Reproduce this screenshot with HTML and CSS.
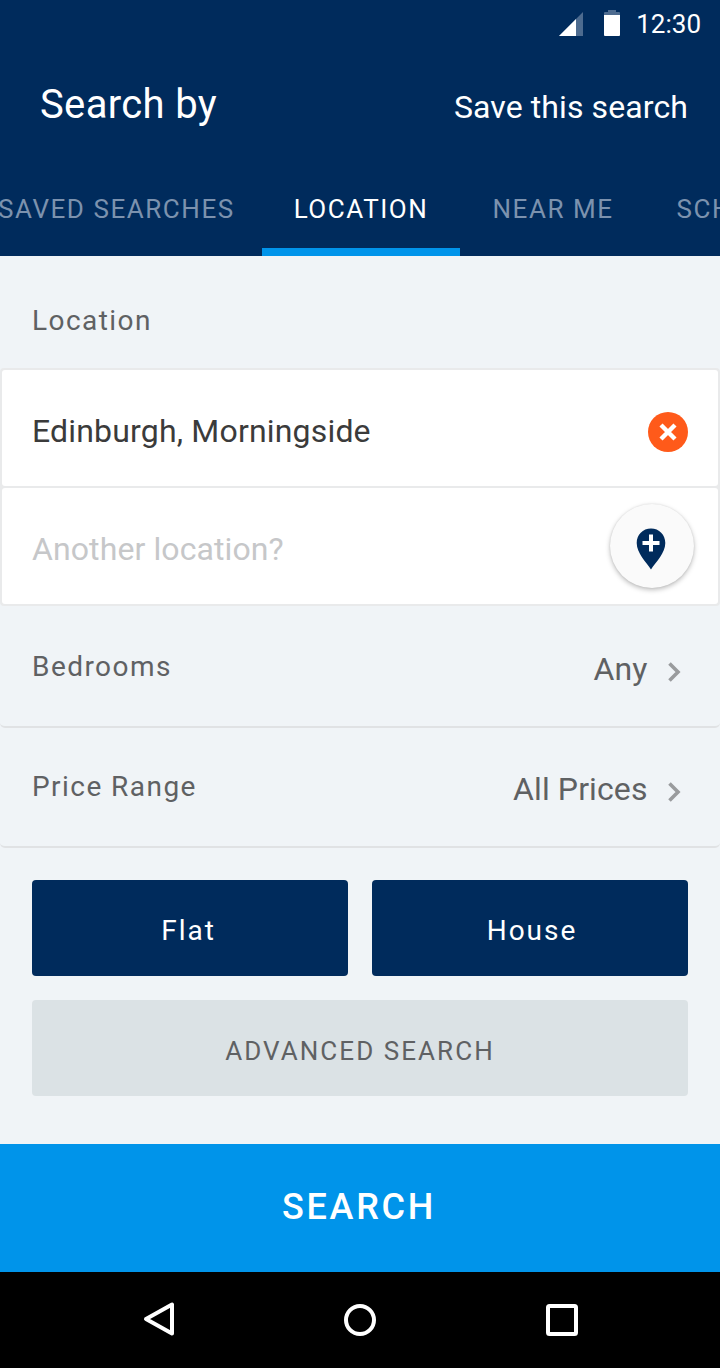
FILE: index.html
```
<!DOCTYPE html>
<html lang="en">
<head>
<meta charset="utf-8">
<title>Property search</title>
<link rel="stylesheet" href="styles.css">
</head>
<body>
<header class="top">
  <div class="status">
    <svg class="signal" width="24" height="24" viewBox="0 0 24 24"><path d="M0 24L24 0V24Z" fill="#4d6b8f"/><path d="M0 24L17 7V24Z" fill="#fff"/></svg>
    <svg class="battery" width="16" height="26" viewBox="0 0 16 26"><path d="M4 0h8v2h3a1 1 0 0 1 1 1v3H0V3a1 1 0 0 1 1-1h3z" fill="#4d6b8f"/><path d="M0 5h16v20a1 1 0 0 1-1 1H1a1 1 0 0 1-1-1z" fill="#fff"/></svg>
    <span class="time">12:30</span>
  </div>
  <div class="header">
    <h1 class="title">Search by</h1>
    <a class="save">Save this search</a>
  </div>
  <nav class="tabs">
    <a class="tab tab-saved">SAVED SEARCHES</a>
    <a class="tab tab-active">LOCATION</a>
    <a class="tab tab-near">NEAR ME</a>
    <a class="tab tab-schools">SCHOOLS</a>
  </nav>
</header>
<main class="form">
  <h2 class="label section-label">Location</h2>
  <div class="fields">
    <div class="field">
      <span class="value-text">Edinburgh, Morningside</span>
      <svg class="clear" width="40" height="40" viewBox="0 0 40 40"><circle cx="20" cy="20" r="20" fill="#ff5a1a"/><path d="M13 13L27 27M27 13L13 27" stroke="#fff" stroke-width="4.4"/></svg>
    </div>
    <div class="field">
      <span class="placeholder">Another location?</span>
      <span class="add">
        <svg width="30" height="42" viewBox="0 0 30 42"><path d="M15 0.5C6.8 0.5 .7 6.8 .7 15C.7 25 10 34 15 41.5C20 34 29.3 25 29.3 15C29.3 6.8 23.2 .5 15 .5Z" fill="#002b5c"/><path d="M15 6.500V23.500M6.500 15H23.500" stroke="#fff" stroke-width="4"/></svg>
      </span>
    </div>
  </div>
  <div class="row row-bedrooms">
    <span class="label">Bedrooms</span>
    <span class="choice">Any</span>
    <svg class="chevron" width="14" height="20" viewBox="0 0 14 20"><path d="M1.500 1.500L10 10L1.500 18.500" fill="none" stroke="#999b9d" stroke-width="3.600"/></svg>
  </div>
  <div class="row row-price">
    <span class="label">Price Range</span>
    <span class="choice">All Prices</span>
    <svg class="chevron" width="14" height="20" viewBox="0 0 14 20"><path d="M1.500 1.500L10 10L1.500 18.500" fill="none" stroke="#999b9d" stroke-width="3.600"/></svg>
  </div>
  <div class="buttons">
    <a class="button type type-flat">Flat</a>
    <a class="button type type-house">House</a>
    <a class="button advanced">ADVANCED SEARCH</a>
  </div>
</main>
<a class="search">SEARCH</a>
<footer class="navbar">
  <svg class="back" width="32" height="36" viewBox="0 0 32 36"><path d="M3 18L29 3.500V32.500Z" fill="none" stroke="#fff" stroke-width="4" stroke-linejoin="round"/></svg>
  <svg class="home" width="32" height="32" viewBox="0 0 32 32"><circle cx="16" cy="16" r="14" fill="none" stroke="#fff" stroke-width="4"/></svg>
  <svg class="recent" width="32" height="32" viewBox="0 0 32 32"><rect x="2" y="2" width="28" height="28" rx="1.500" fill="none" stroke="#fff" stroke-width="4"/></svg>
</footer>
</body>
</html>
```
FILE: styles.css
```
* { box-sizing: border-box; }
body {
  margin: 0;
  width: 720px;
  height: 1368px;
  overflow: hidden;
  display: flex;
  flex-direction: column;
  background: #f0f4f7;
  font-family: Roboto, "Liberation Sans", sans-serif;
  font-weight: 400;
  color: #5f6163;
}
svg { display: block; flex: none; }
h1, h2 { margin: 0; font-weight: 400; }
.top { height: 256px; background: #002b5c; color: #fff; }
.status {
  height: 48px;
  display: flex;
  justify-content: flex-end;
  align-items: center;
  padding-right: 19px;
}
.signal { margin: 0 21px 0 0; }
.battery { margin: 0 16px 2px 0; }
.time { font-size: 26px; }
.header {
  height: 112px;
  display: flex;
  justify-content: space-between;
  align-items: baseline;
  padding: 0 32px 0 40px;
}
.title { font-size: 40px; line-height: 114px; letter-spacing: .35px; }
.save { font-size: 32px; letter-spacing: .1px; }
.tabs { height: 96px; display: flex; overflow: hidden; }
.tab {
  flex: none;
  line-height: 98px;
  font-size: 26px;
  letter-spacing: 1.55px;
  white-space: nowrap;
  color: #7c92ae;
}
.tab-saved { width: 264px; margin-left: -2px; }
.tab-active {
  width: 198px;
  text-align: center;
  color: #fff;
  border-bottom: 8px solid #0094ea;
}
.tab-near { width: 184px; padding-left: 32.5px; }
.tab-schools { padding-left: 32.5px; }
.form { flex: 1; }
.label { font-size: 28px; letter-spacing: 1.45px; }
.section-label { height: 112px; padding: 16px 32px 0; line-height: 98px; }
.fields {
  border: 2px solid #e9eaeb;
  border-radius: 4px;
  background: #e9eaeb;
  display: grid;
  gap: 2px;
}
.field {
  height: 116px;
  display: flex;
  align-items: center;
  justify-content: space-between;
  padding: 6px 30px 0;
  border-radius: 3px;
  background: #fff;
  font-size: 32px;
}
.value-text { color: #3b3b3b; letter-spacing: .18px; }
.clear { margin-top: 2px; }
.placeholder { color: #c6c7c9; letter-spacing: .1px; }
.add {
  width: 84px;
  height: 84px;
  margin: -6px -6px 0 0;
  border-radius: 50%;
  background: #fafafa;
  box-shadow: 0 2px 5px rgba(0, 0, 0, .26), 0 0 2px rgba(0, 0, 0, .1);
  display: flex;
  align-items: center;
  justify-content: center;
  padding: 6px 2px 0 0;
}
.row {
  height: 120px;
  border-bottom: 2px solid #e0e2e4;
  border-radius: 0 0 5px 5px;
  display: flex;
  align-items: center;
  padding: 0 38px 0 32px;
}
.row-bedrooms { height: 122px; }
.row-price { padding-bottom: 2px; }
.choice { margin: 6px 20.5px 0 auto; font-size: 32px; letter-spacing: .1px; }
.chevron { margin-top: 12px; }
.buttons {
  padding: 32px 32px 0;
  display: grid;
  grid-template-columns: 1fr 1fr;
  gap: 24px;
}
.button { height: 96px; line-height: 101px; border-radius: 4px; text-align: center; }
.type { background: #002b5c; color: #fff; font-size: 28px; letter-spacing: 2px; }
.type-flat { padding-right: 3px; }
.type-house { padding-left: 4px; }
.advanced {
  grid-column: span 2;
  background: #dbe2e5;
  font-size: 26px;
  letter-spacing: 2.05px;
  line-height: 102px;
}
.search {
  height: 128px;
  line-height: 126px;
  padding-right: 2px;
  background: #0094ea;
  color: #fff;
  text-align: center;
  font-size: 36px;
  font-weight: 500;
  letter-spacing: 2.75px;
}
.navbar {
  height: 96px;
  background: #000;
  display: flex;
  align-items: center;
  justify-content: space-between;
  padding: 0 142px 0 143px;
}
.back { margin-top: -3px; }
.home { margin: 0 1px 0 0; }
```
